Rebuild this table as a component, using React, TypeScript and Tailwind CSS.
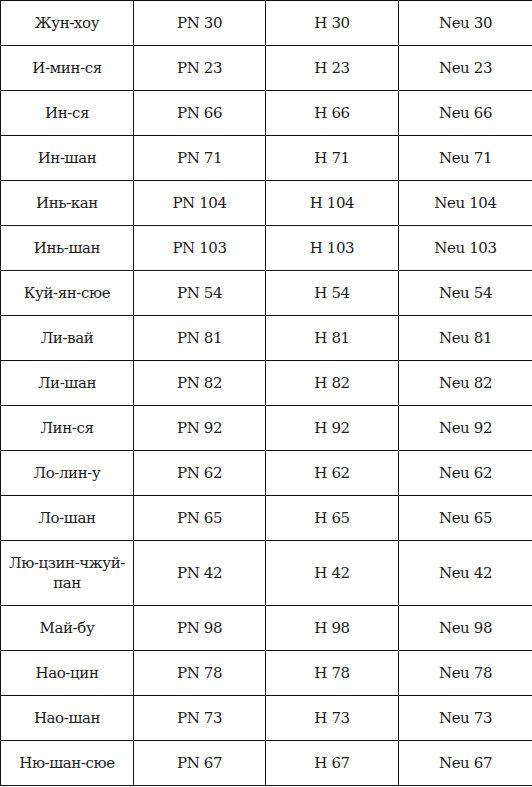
import React from "react";

const rows: [React.ReactNode, string][] = [
  ["Жун-хоу", "30"],
  ["И-мин-ся", "23"],
  ["Ин-ся", "66"],
  ["Ин-шан", "71"],
  ["Инь-кан", "104"],
  ["Инь-шан", "103"],
  ["Куй-ян-сюе", "54"],
  ["Ли-вай", "81"],
  ["Ли-шан", "82"],
  ["Лин-ся", "92"],
  ["Ло-лин-у", "62"],
  ["Ло-шан", "65"],
  [
    <>
      Лю-цзин-чжуй-
      <br />
      пан
    </>,
    "42",
  ],
  ["Май-бу", "98"],
  ["Нао-цин", "78"],
  ["Нао-шан", "73"],
  ["Ню-шан-сюе", "67"],
];

export default function App() {
  const td =
    "border border-[#111] px-1 py-[12px] text-center align-middle leading-[20px]";
  return (
    <div className="w-[532px] bg-white text-[#1c1c1c] text-[15px] font-['DejaVu_Serif',serif] tracking-[-0.4px]">
      <table className="w-[532px] border-collapse table-fixed">
        <colgroup>
          <col className="w-[133px]" />
          <col className="w-[132px]" />
          <col className="w-[133px]" />
          <col className="w-[134px]" />
        </colgroup>
        <tbody>
          {rows.map(([name, n], i) => (
            <tr key={i}>
              <td className={td}>{name}</td>
              <td className={td}>PN {n}</td>
              <td className={td}>H {n}</td>
              <td className={td}>Neu {n}</td>
            </tr>
          ))}
        </tbody>
      </table>
    </div>
  );
}
